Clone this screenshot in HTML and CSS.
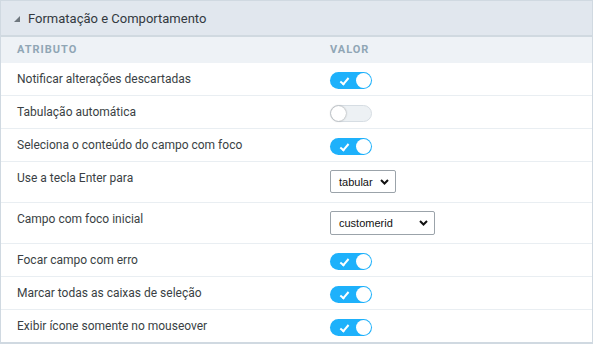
FILE: index.html
```html
<!DOCTYPE html>
<html lang="pt">
<head>
<meta charset="utf-8">
<link rel="stylesheet" href="styles.css">
</head>
<body>
<div class="panel">
  <div class="panel-head">
    <span class="caret"></span>
    <span class="title">Formatação e Comportamento</span>
  </div>
  <div class="row cols">
    <div class="c1">Atributo</div>
    <div class="c2">Valor</div>
  </div>
  <div class="row">
    <div class="c1">Notificar alterações descartadas</div>
    <div class="c2"><span class="tg on"><span class="ck"></span><span class="kn"></span></span></div>
  </div>
  <div class="row">
    <div class="c1">Tabulação automática</div>
    <div class="c2"><span class="tg off"><span class="kn"></span></span></div>
  </div>
  <div class="row">
    <div class="c1">Seleciona o conteúdo do campo com foco</div>
    <div class="c2"><span class="tg on"><span class="ck"></span><span class="kn"></span></span></div>
  </div>
  <div class="row tall">
    <div class="c1">Use a tecla Enter para</div>
    <div class="c2"><span class="sel s1">tabular<svg class="chev" viewBox="0 0 9 6" width="9" height="6"><path d="M1 1 L4.5 4.5 L8 1" fill="none" stroke="#111" stroke-width="2"/></svg></span></div>
  </div>
  <div class="row tall">
    <div class="c1">Campo com foco inicial</div>
    <div class="c2"><span class="sel s2">customerid<svg class="chev" viewBox="0 0 9 6" width="9" height="6"><path d="M1 1 L4.5 4.5 L8 1" fill="none" stroke="#111" stroke-width="2"/></svg></span></div>
  </div>
  <div class="row">
    <div class="c1">Focar campo com erro</div>
    <div class="c2"><span class="tg on"><span class="ck"></span><span class="kn"></span></span></div>
  </div>
  <div class="row">
    <div class="c1">Marcar todas as caixas de seleção</div>
    <div class="c2"><span class="tg on"><span class="ck"></span><span class="kn"></span></span></div>
  </div>
  <div class="row">
    <div class="c1">Exibir ícone somente no mouseover</div>
    <div class="c2"><span class="tg on"><span class="ck"></span><span class="kn"></span></span></div>
  </div>
</div>
</body>
</html>
```
FILE: styles.css
```css
html, body { margin: 0; padding: 0; background: #fff; }
body { font-family: Roboto, "Liberation Sans", Arial, sans-serif; color: #3a3f44; }
.panel {
  width: 591px;
  border: 1px solid #d0d9e1;
  border-bottom-width: 2px;
}
.panel-head {
  box-sizing: border-box;
  height: 36px;
  background: #e1e7ee;
  border-bottom: 2px solid #d0d9e0;
  display: flex;
  align-items: center;
  padding-left: 13px;
}
.caret {
  width: 0; height: 0;
  border-left: 6px solid transparent;
  border-bottom: 6px solid #6f777e;
  margin-right: 8px;
  margin-top: 1px;
}
.title { font-size: 13px; color: #33393f; }
.row {
  display: flex;
  align-items: flex-start;
  height: 32px;
  border-bottom: 1px solid #e9eef2;
}
.row.tall { height: 40px; }
.row:last-child { border-bottom: 0; }
.c1 {
  width: 313px;
  padding: 8px 0 0 16px;
  font-size: 12px;
  line-height: 16px;
}
.c2 {
  padding-top: 9px;
  line-height: 0;
}
.tall .c2 { padding-top: 8px; }
.cols { background: #eef2f6; border-bottom: 0; height: 26px; }
.cols .c1, .cols .c2 {
  text-transform: uppercase;
  font-size: 11px;
  font-weight: 700;
  letter-spacing: 1px;
  color: #90a6b5;
  padding-top: 5px;
  line-height: 16px;
}
.cols .c1 { padding-left: 16px; }
.tg {
  display: inline-block;
  position: relative;
  width: 42px;
  height: 17px;
  border-radius: 9px;
  box-sizing: border-box;
}
.tg.on { background: #1eb1fb; }
.tg.off { background: #edf1f4; border: 1px solid #d6dde3; }
.kn {
  position: absolute;
  top: 1px;
  width: 15px; height: 15px;
  border-radius: 50%;
  background: #fff;
}
.tg.on .kn { right: 1px; }
.tg.off .kn { left: 0; top: 0; box-shadow: 0 0 2px rgba(0,0,0,0.45); }
.ck {
  position: absolute;
  left: 12px; top: 4px;
  width: 3px; height: 7px;
  border-right: 2px solid #fff;
  border-bottom: 2px solid #fff;
  transform: rotate(40deg);
}
.sel {
  display: inline-flex;
  align-items: center;
  justify-content: space-between;
  box-sizing: border-box;
  border: 1px solid #9ba3aa;
  border-radius: 2px;
  font-family: Arial, "Liberation Sans", sans-serif;
  font-size: 11px;
  line-height: 14px;
  color: #111;
  padding: 0 6px 0 8px;
}
.s1 { width: 66px; height: 23px; }
.s2 { width: 105px; height: 24px; }
```
